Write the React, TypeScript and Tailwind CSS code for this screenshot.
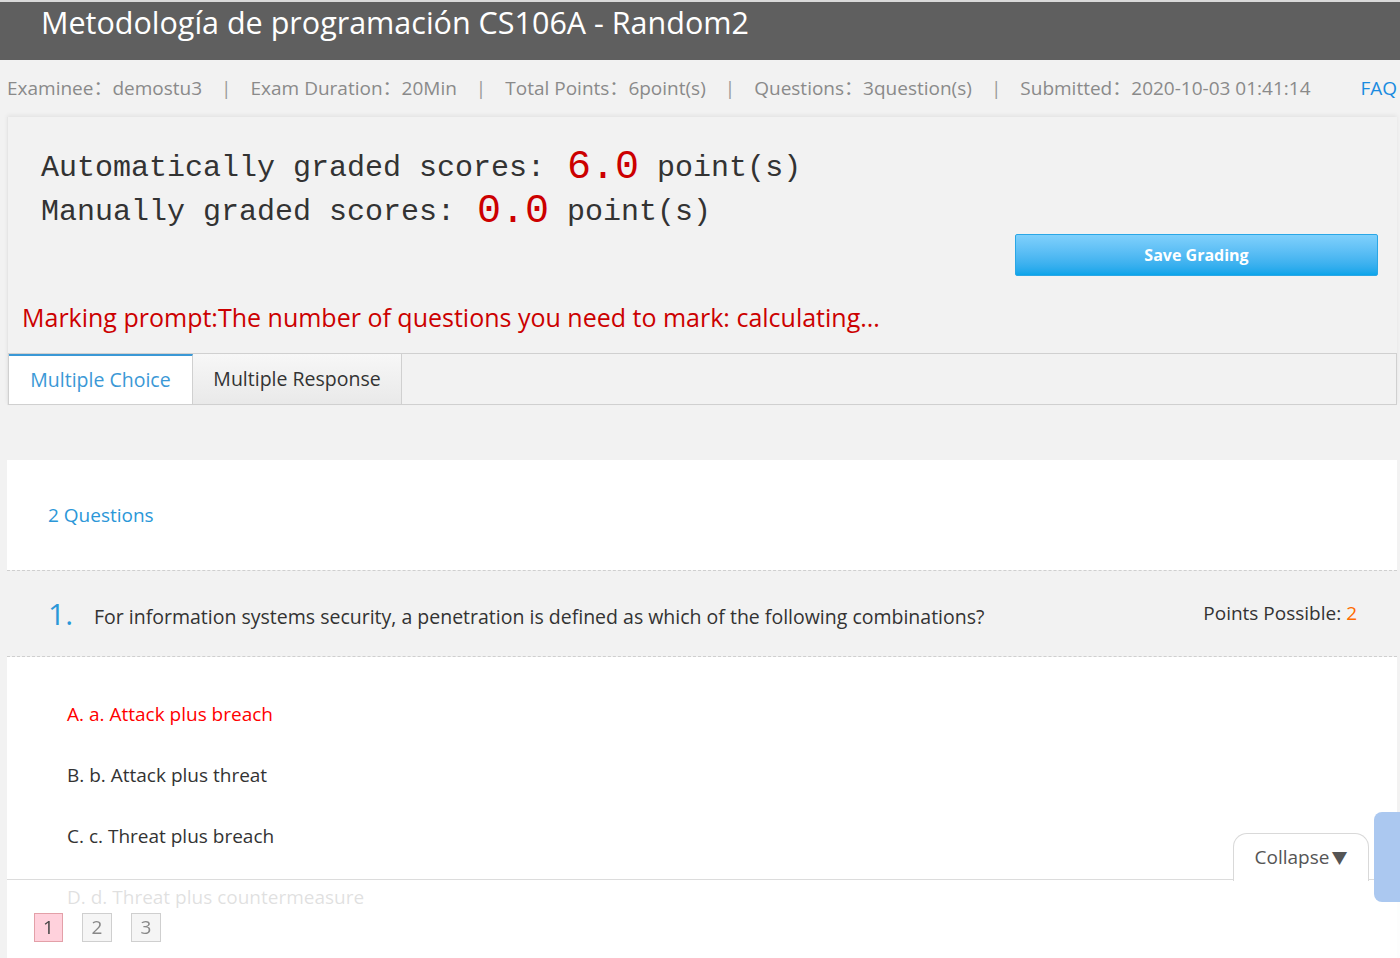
const sans = "font-['Open_Sans','Noto_Sans_CJK_SC',sans-serif]";

function InfoBar() {
  const items = [
    ['Examinee', 'demostu3'],
    ['Exam Duration', '20Min'],
    ['Total Points', '6point(s)'],
    ['Questions', '3question(s)'],
    ['Submitted', '2020-10-03 01:41:14'],
  ];
  return (
    <div className="h-[57px] flex items-center pl-[7px] pr-[3px] text-[19px] text-[#8a8a8a]">
      {items.map(([k, v], i) => (
        <span key={k} className="flex items-center">
          {i > 0 && <span className="mx-[19px] text-[#999]">|</span>}
          <span>
            {k}：{v}
          </span>
        </span>
      ))}
      <span className="ml-auto text-[#1a8be0]">FAQ</span>
    </div>
  );
}

function ScorePanel() {
  return (
    <div className="ml-[7px] mr-[3px] border-l border-[#e6e6e6] shadow-[0_-2px_4px_rgba(0,0,0,0.06)]">
      <div className="pt-[29px] pl-[33px] font-['Liberation_Mono',monospace] text-[30px] text-[#333]">
        <div className="h-[44px] flex items-center whitespace-pre">
          Automatically graded scores:<span className="text-[40px] text-[#cc0000] ml-[22px] mr-[18px]">6.0</span>point(s)
        </div>
        <div className="h-[44px] flex items-center whitespace-pre">
          Manually graded scores:<span className="text-[40px] text-[#cc0000] ml-[22px] mr-[18px]">0.0</span>point(s)
        </div>
      </div>
      <div className="flex justify-end pr-[19px]">
        <button className="w-[363px] h-[42px] rounded-[2px] border border-[#2aa7e6] bg-gradient-to-b from-[#7fd0fc] to-[#08a5ea] text-white font-bold text-[16px]">
          Save Grading
        </button>
      </div>
      <div className="mt-[25px] pb-[20px] pl-[14px] h-[52px] text-[25px] leading-[32px] text-[#cc0000]">
        Marking prompt:The number of questions you need to mark: calculating...
      </div>
      <div className="h-[52px] flex border border-[#d0d0d0] bg-[#f2f2f2]">
        <div className="w-[184px] flex items-center justify-center bg-white border-t-2 border-[#3a98d6] border-r border-r-[#d0d0d0] text-[19.5px] text-[#3a98d6]">
          Multiple Choice
        </div>
        <div className="w-[209px] flex items-center justify-center bg-gradient-to-b from-[#f7f7f7] to-[#e9e9e9] border-r border-[#d0d0d0] text-[19.5px] text-[#333]">
          Multiple Response
        </div>
      </div>
    </div>
  );
}

function QuestionCard() {
  const options = [
    { t: 'A. a. Attack plus breach', c: 'text-[#ff0000]' },
    { t: 'B. b. Attack plus threat', c: 'text-[#333]' },
    { t: 'C. c. Threat plus breach', c: 'text-[#333]' },
    { t: 'D. d. Threat plus countermeasure', c: 'text-[#333]' },
  ];
  return (
    <div className="mt-[55px] ml-[7px] mr-[3px] bg-white pb-[120px]">
      <div className="h-[110px] flex items-center pl-[41px] text-[19px] text-[#2b97d8]">2 Questions</div>
      <div className="h-[87px] flex items-center border-y border-dashed border-[#cfcfcf] bg-[#f2f2f2] pl-[41px] pr-[40px]">
        <span className="text-[30px] text-[#2b97d8] w-[46px]">1.</span>
        <span className="text-[19.5px] text-[#333] pt-[6px]">
          For information systems security, a penetration is defined as which of the following combinations?
        </span>
        <span className="ml-auto text-[19px] text-[#333]">
          Points Possible: <span className="text-[#ff6a00]">2</span>
        </span>
      </div>
      <div className="pt-[27px] pl-[60px]">
        {options.map((o) => (
          <div key={o.t} className={`h-[61px] flex items-center text-[19px] ${o.c}`}>
            {o.t}
          </div>
        ))}
      </div>
    </div>
  );
}

function BottomBar() {
  return (
    <div className="fixed bottom-0 left-[7px] right-0 h-[79px] bg-white/85 border-t border-[#dcdcdc]">
      <div className="relative h-full">
        <div className="absolute right-[31px] bottom-full mb-[-1px] w-[136px] h-[48px] rounded-t-[14px] border border-b-0 border-[#d9d9d9] bg-white flex items-center justify-center text-[19px] text-[#555]">
          Collapse<span className="text-[16px] ml-[2px]">▼</span>
        </div>
        <div className="flex gap-[19px] pl-[27px] pt-[33px]">
          <div className="w-[29px] h-[29px] flex items-center justify-center border border-[#e3a0a8] bg-[#ffd1dc] text-[#444] text-[19px]">1</div>
          <div className="w-[30px] h-[29px] flex items-center justify-center border border-[#cfcfcf] bg-[#f5f5f5] text-[#888] text-[19px]">2</div>
          <div className="w-[30px] h-[29px] flex items-center justify-center border border-[#cfcfcf] bg-[#f5f5f5] text-[#888] text-[19px]">3</div>
        </div>
      </div>
    </div>
  );
}

export default function App() {
  return (
    <div className={`min-h-screen bg-[#f2f2f2] ${sans}`}>
      <div className="border-t-2 border-[#d9d9d9] h-[60px] bg-[#5f5f5f] flex items-center pl-[41px] pb-[16px] text-white text-[30.5px]">
        Metodología de programación CS106A - Random2
      </div>
      <InfoBar />
      <ScorePanel />
      <QuestionCard />
      <BottomBar />
      <div className="fixed right-0 top-[812px] w-[26px] h-[90px] rounded-l-[8px] bg-[#abc8f0]" />
    </div>
  );
}
